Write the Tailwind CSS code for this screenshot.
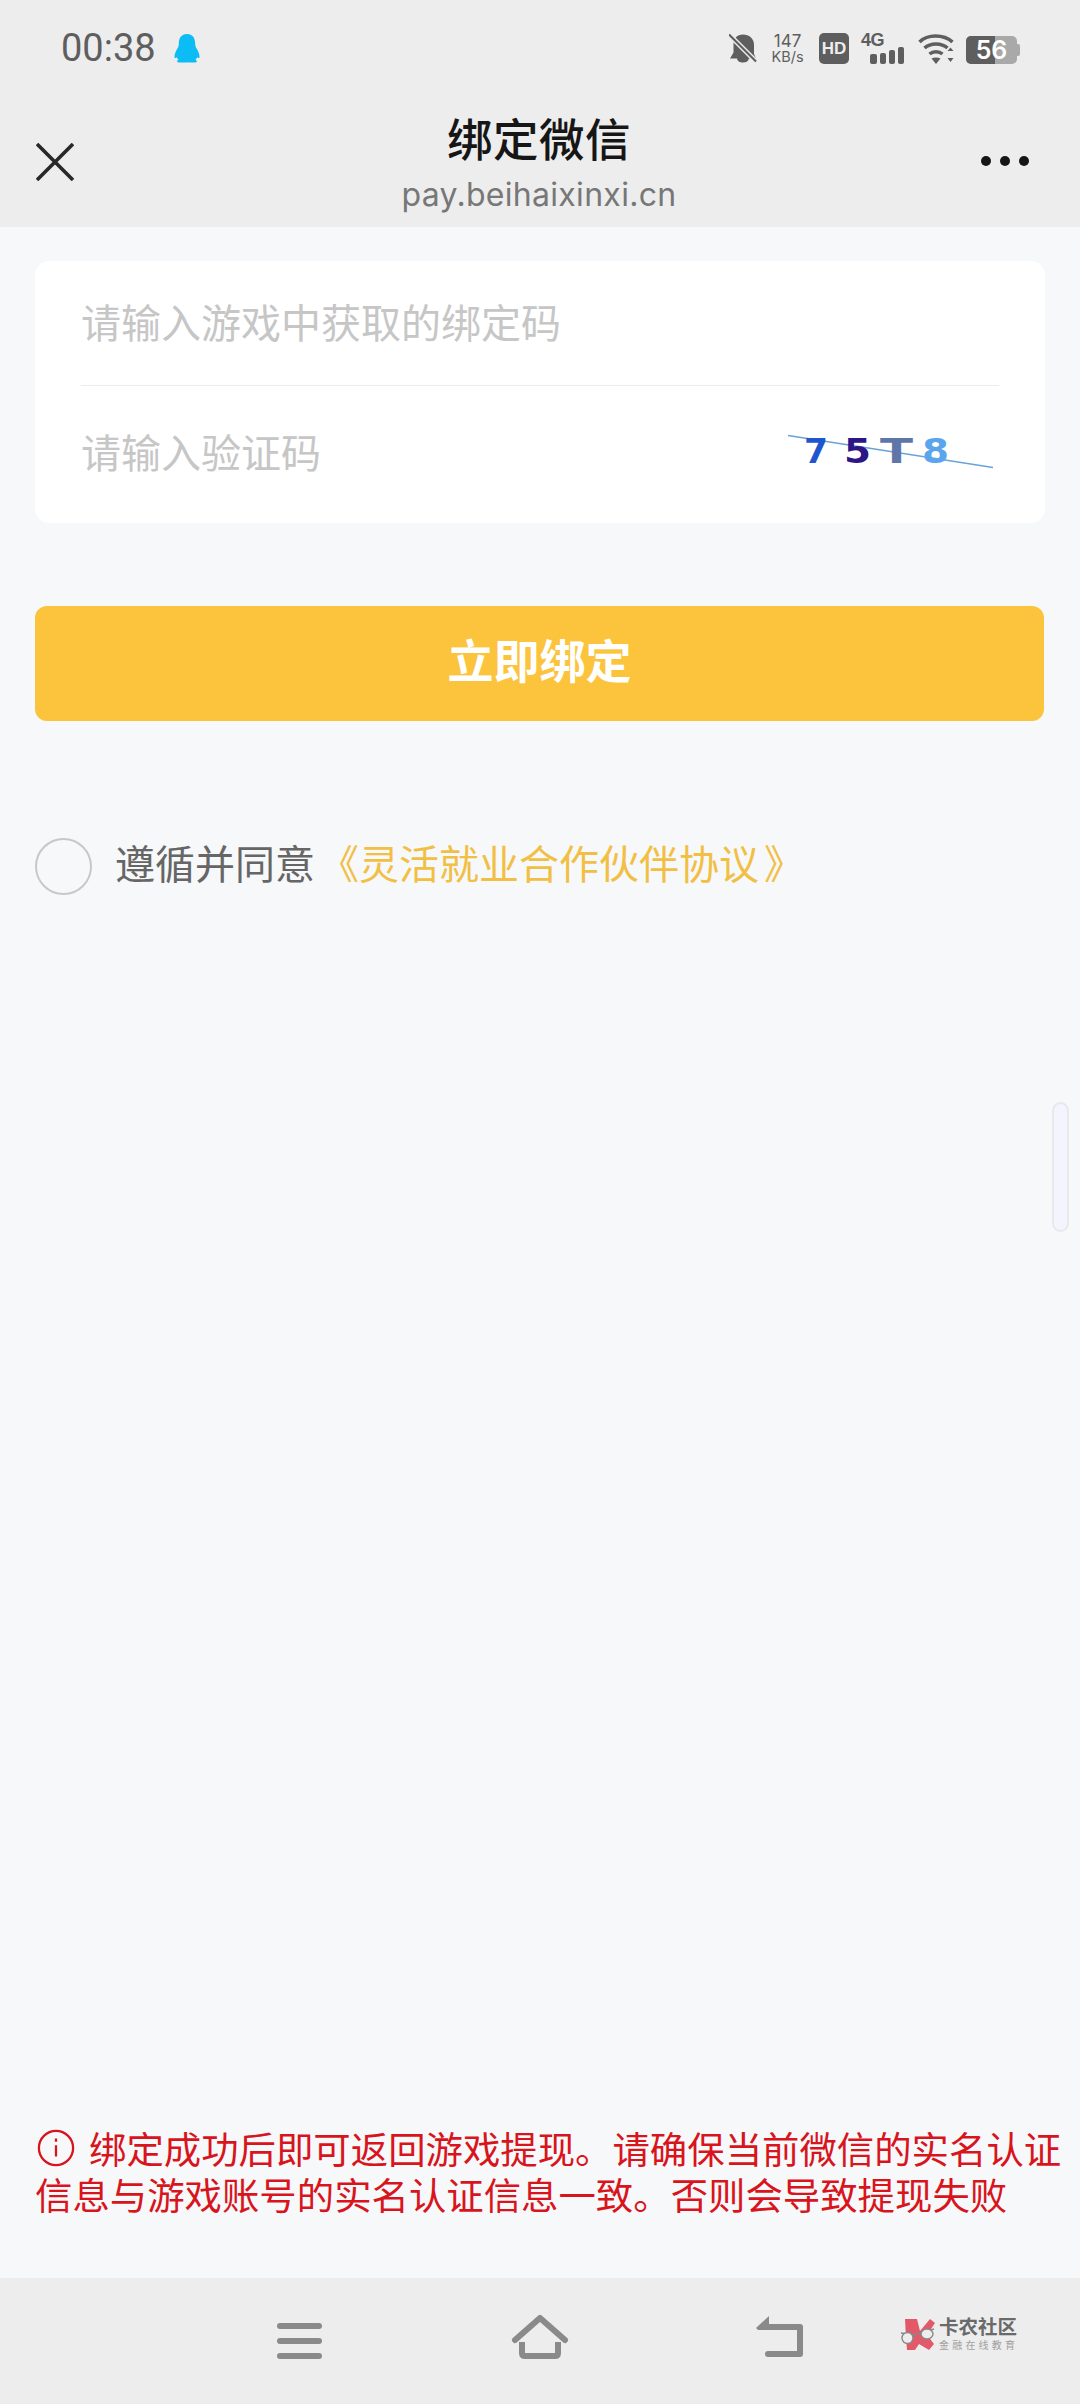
<!DOCTYPE html>
<html lang="zh"><head><meta charset="utf-8">
<script src="https://cdn.jsdelivr.net/npm/@tailwindcss/browser@4"></script>
</head>
<body class="m-0">
<div class="relative w-[1080px] h-[2404px] flex flex-col overflow-hidden bg-[#f6f8fa] font-['Roboto','Noto_Sans_CJK_SC',sans-serif]">
  <header class="bg-[#ededed] h-[227px] shrink-0 flex flex-col">
    <div class="h-[96px] shrink-0 flex items-start justify-between pl-[61px] pr-[60px] pt-[32px]">
      <div class="flex items-center gap-[18px] h-[32px]">
        <span class="text-[38px] leading-[32px] text-[#5e5e5e] font-['Roboto',sans-serif]">00:38</span>
        <svg width="26" height="29" viewBox="0 0 27 30" fill="#0bbdf4"><path d="M13.500 0C7.500 0 5 4.500 5 10c0 2-.6 3.600-1.800 5.600C2 17.800.3 21 .5 24c.1 1.200 1 1.200 2.200 0 .5 1 1.200 1.900 2 2.600C3.500 27.300 3 28 3.500 29c.3.700 8 .700 10 .200 2 .500 9.700.500 10-.200.500-1 0-1.700-1.200-2.400.800-.700 1.500-1.600 2-2.600 1.200 1.200 2.100 1.200 2.200 0 .2-3-1.500-6.200-2.700-8.400C22.600 13.600 22 12 22 10 22 4.500 19.500 0 13.500 0Z"/></svg>
      </div>
      <div class="flex items-end h-[32px] text-[#5e5e5e]">
        <svg width="28" height="31" viewBox="0 0 28 30" class="mr-[13px]"><path fill="#5e5e5e" d="M14 1C8 1 4.500 5 4.500 11v8L1 25h7c.5 3 3 4 6 4s5-1 6-4h7l-2-4.500V11C25 5 20 1 14 1Z"/><path d="M0 1 27 28" stroke="#ededed" stroke-width="5"/><path d="M0 1 27 28" stroke="#5e5e5e" stroke-width="2.200"/></svg>
        <div class="flex flex-col items-center w-[35px] font-['Inter',sans-serif] mr-[14px]">
          <span class="text-[17px] leading-[17px]">147</span>
          <span class="text-[14.500px] leading-[14px]">KB/s</span>
        </div>
        <div class="w-[30px] h-[31px] rounded-[5px] bg-[#5e5e5e] flex items-center justify-center text-[#ededed] text-[17px] font-bold font-['Liberation_Sans',sans-serif] mr-[12px]">HD</div>
        <div class="relative w-[44px] h-[31px] mr-[13px]">
          <span class="absolute left-0 top-[-1px] text-[18px] leading-[16px] font-bold font-['Liberation_Sans',sans-serif] tracking-[-0.5px]">4G</span>
          <div class="absolute left-[9px] bottom-0 flex items-end gap-[3px]">
            <div class="w-[7px] h-[10px] rounded-[2px] bg-[#5e5e5e]"></div>
            <div class="w-[6px] h-[11px] rounded-[2px] bg-[#5e5e5e]"></div>
            <div class="w-[6px] h-[14px] rounded-[2px] bg-[#5e5e5e]"></div>
            <div class="w-[6px] h-[17px] rounded-[2px] bg-[#5e5e5e]"></div>
          </div>
        </div>
        <svg width="37" height="30" viewBox="0 0 36 30" fill="none" stroke="#5e5e5e" stroke-width="3.500" class="mr-[11px]"><path d="M1 8C9 0 25 0 34 8"/><path d="M6 14c6-5.500 17-5.500 23 0"/><path d="M11 20c3.500-3 9.500-3 13 0"/><path d="M13 24.500 17.500 30l4.500-5.500c-2.500-1.500-6.500-1.500-9 0Z" fill="#5e5e5e" stroke="none"/><path d="M29 17l3-3.500 3 3.500ZM29 24l3 4 3-4Z" fill="#5e5e5e" stroke="none"/></svg>
        <div class="relative w-[51px] h-[28px] rounded-[5px] overflow-hidden bg-[#a9a9a9] flex">
          <div class="w-[29px] h-full bg-[#5e5e5e]"></div>
          <span class="absolute inset-0 flex items-center justify-center text-white text-[25px] leading-none font-semibold font-['Inter',sans-serif]">56</span>
        </div>
        <div class="w-[3px] h-[12px] mb-[8px] rounded-r-[2px] bg-[#a9a9a9]"></div>
      </div>
    </div>
    <div class="relative flex-1 flex items-start justify-between">
      <svg width="38" height="38" viewBox="0 0 38 38" fill="none" stroke="#282828" stroke-width="3.600" class="absolute left-[36px] top-[47px]"><path d="M1 1 37 37M37 1 1 37"/></svg>
      <div class="w-full flex flex-col items-center pt-[22px]">
        <span class="text-[45.500px] leading-[48px] font-medium text-[#161616] tracking-[0.5px] ml-[-2px]">绑定微信</span>
        <span class="text-[32px] leading-[40px] text-[#777] font-['Inter',sans-serif] mt-[9px] tracking-[0.3px] ml-[-2px]">pay.beihaixinxi.cn</span>
      </div>
      <div class="absolute left-[981px] top-[60px] flex gap-[9px]">
        <div class="w-[10px] h-[10px] rounded-full bg-[#161616]"></div>
        <div class="w-[10px] h-[10px] rounded-full bg-[#161616]"></div>
        <div class="w-[10px] h-[10px] rounded-full bg-[#161616]"></div>
      </div>
    </div>
  </header>

  <main class="flex-1 flex flex-col px-[35px] pt-[34px] relative">
    <section class="h-[262px] bg-white rounded-[14px] px-[46px] flex flex-col">
      <div class="h-[125px] shrink-0 flex items-center pt-[3px] border-b border-[#ececec] text-[40px] text-[#c6c6c6]">请输入游戏中获取的绑定码</div>
      <div class="flex-1 flex items-center justify-between text-[40px] text-[#c6c6c6]">
        <span>请输入验证码</span>
        <svg width="210" height="50" viewBox="0 0 210 50" class="mr-[3px]">
          <path d="M2 5.500 207 37.500" stroke="#6aa3d8" stroke-width="1.600" fill="none"/>
          <text x="18" y="32.500" font-family="DejaVu Sans" font-weight="700" font-size="33" fill="#1e56cf" textLength="24" lengthAdjust="spacingAndGlyphs">7</text>
          <text x="58" y="32.500" font-family="DejaVu Sans" font-weight="700" font-size="33" fill="#2b1587" textLength="27" lengthAdjust="spacingAndGlyphs">5</text>
          <text x="94" y="32.500" font-family="DejaVu Sans" font-weight="700" font-size="33" fill="#5f77a8" textLength="33" lengthAdjust="spacingAndGlyphs">T</text>
          <text x="136" y="32.500" font-family="DejaVu Sans" font-weight="700" font-size="33" fill="#5aa5ee" textLength="27" lengthAdjust="spacingAndGlyphs">8</text>
        </svg>
      </div>
    </section>
    <button class="mt-[83px] h-[115px] w-[1009px] rounded-[12px] bg-[#fcc33c] text-white text-[46px] font-bold flex items-center justify-center pb-[2px]">立即绑定</button>
    <div class="mt-[116px] flex items-center h-[58px]">
      <div class="w-[57px] h-[57px] rounded-full border-[2px] border-[#c8c8c8] shrink-0"></div>
      <span class="ml-[23px] text-[40px] text-[#666]">遵循并同意</span>
      <span class="ml-[4px] text-[40px] text-[#f2bf45]">《灵活就业合作伙伴协议<span class="ml-[5px]">》</span></span>
    </div>
    <div class="mt-auto mb-[58px] text-[37.400px] leading-[46px] text-[#d8141c] w-[1040px]">
      <div class="flex items-center whitespace-nowrap">
        <svg width="38" height="38" viewBox="0 0 40 40" fill="none" stroke="#d8141c" stroke-width="2.400" class="shrink-0 mr-[14px] mt-[-6px] ml-[2px]"><circle cx="20" cy="20" r="18"/><path d="M20 17v12M20 10v3.500"/></svg>
        <span>绑定成功后即可返回游戏提现。请确保当前微信的实名认证</span>
      </div>
      <div class="whitespace-nowrap">信息与游戏账号的实名认证信息一致。否则会导致提现失败</div>
    </div>
    <div class="absolute left-[1052px] top-[875px] w-[17px] h-[130px] rounded-full bg-[#f3f4fd] border-[2px] border-[#e8e9ea]"></div>
  </main>

  <nav class="bg-[#ededed] h-[126px] shrink-0 relative">
    <svg width="45" height="36" viewBox="0 0 45 36" fill="#8a8a8a" class="absolute left-[277px] top-[45px]"><rect width="45" height="6" y="0" rx="3"/><rect width="45" height="6" y="15" rx="3"/><rect width="45" height="6" y="30" rx="3"/></svg>
    <svg width="60" height="44" viewBox="0 0 60 44" fill="none" stroke="#8a8a8a" stroke-width="6" stroke-linejoin="round" stroke-linecap="round" class="absolute left-[510px] top-[37px]"><path d="M5 25 30 3l25 22"/><path d="M12 27v11q0 3 3 3h30q3 0 3-3V27" stroke-linecap="butt"/></svg>
    <svg width="50" height="44" viewBox="0 0 50 44" fill="none" class="absolute left-[755px] top-[38px]"><path d="M12 11H45V38H13" stroke="#8a8a8a" stroke-width="6" stroke-linejoin="round" stroke-linecap="round"/><path d="M1 12 14 0V14H3Z" fill="#8a8a8a"/></svg>
    <div class="absolute left-[900px] top-[40px] flex items-start">
      <svg width="36" height="33" viewBox="0 0 36 33"><path d="M5 1H17L20 13 30 1 35 5 27 17 34 26 29 32 19 26 15 32H7L6 20Z" fill="#e25a6a"/><path d="M1 15 14 17c3-2 5-2 7-2L34 11" fill="none" stroke="#888" stroke-width="1.500"/><ellipse cx="7.500" cy="20" rx="5.500" ry="5.500" fill="#ededed" stroke="#888" stroke-width="1.400"/><ellipse cx="27" cy="16" rx="6" ry="5" fill="#ededed" stroke="#888" stroke-width="1.400"/></svg>
      <div class="flex flex-col ml-[3px] items-start">
        <span class="text-[19.500px] leading-[20px] font-bold text-[#6a6a6a]">卡农社区</span>
        <span class="text-[10px] leading-[14px] text-[#a0a0a0] mt-[1px] tracking-[3.200px]">金融在线教育</span>
      </div>
    </div>
  </nav>
</div>
</body></html>
